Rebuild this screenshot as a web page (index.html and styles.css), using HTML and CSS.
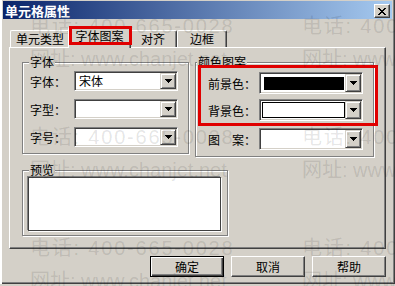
FILE: index.html
```html
<!DOCTYPE html>
<html lang="zh-CN">
<head>
    <meta charset="UTF-8">
    <meta name="viewport" content="width=device-width, initial-scale=1.0">
    <title>单元格属性</title>
    <link rel="stylesheet" href="styles.css">
</head>
<body>
    <div class="dialog">
        <div class="titlebar">
            <span class="title">单元格属性</span>
            <span class="close">
                <svg width="8" height="7" viewBox="0 0 8 7"><path d="M0 0h2v1H0zM6 0h2v1H6zM1 1h2v1H1zM5 1h2v1H5zM2 2h4v1H2zM3 3h2v1H3zM2 4h4v1H2zM1 5h2v1H1zM5 5h2v1H5zM0 6h2v1H0zM6 6h2v1H6z" fill="#000"/></svg>
            </span>
        </div>

        <div class="content">
            <div class="tabs">
                <div class="tab tab-type">单元类型</div>
                <div class="tab tab-font active">字体图案</div>
                <div class="tab tab-align">对齐</div>
                <div class="tab tab-border">边框</div>
            </div>

            <div class="panel">
                <div class="top-groups">
                    <fieldset class="group font-group">
                        <legend>字体</legend>
                        <div class="field">
                            <label>字体：</label>
                            <div class="combo">
                                <span class="value">宋体</span>
                                <span class="arrow"><svg width="7" height="4" viewBox="0 0 7 4"><path d="M0 0h7v1H0zM1 1h5v1H1zM2 2h3v1H2zM3 3h1v1H3z" fill="#000"/></svg></span>
                            </div>
                        </div>
                        <div class="field">
                            <label>字型：</label>
                            <div class="combo">
                                <span class="value"></span>
                                <span class="arrow"><svg width="7" height="4" viewBox="0 0 7 4"><path d="M0 0h7v1H0zM1 1h5v1H1zM2 2h3v1H2zM3 3h1v1H3z" fill="#000"/></svg></span>
                            </div>
                        </div>
                        <div class="field">
                            <label>字号：</label>
                            <div class="combo">
                                <span class="value"></span>
                                <span class="arrow"><svg width="7" height="4" viewBox="0 0 7 4"><path d="M0 0h7v1H0zM1 1h5v1H1zM2 2h3v1H2zM3 3h1v1H3z" fill="#000"/></svg></span>
                            </div>
                        </div>
                    </fieldset>

                    <fieldset class="group color-group">
                        <legend>颜色图案</legend>
                        <div class="marked">
                            <div class="field">
                                <label>前景色：</label>
                                <div class="combo">
                                    <span class="swatch fore"></span>
                                    <span class="arrow"><svg width="7" height="4" viewBox="0 0 7 4"><path d="M0 0h7v1H0zM1 1h5v1H1zM2 2h3v1H2zM3 3h1v1H3z" fill="#000"/></svg></span>
                                </div>
                            </div>
                            <div class="field">
                                <label>背景色：</label>
                                <div class="combo">
                                    <span class="swatch back"></span>
                                    <span class="arrow"><svg width="7" height="4" viewBox="0 0 7 4"><path d="M0 0h7v1H0zM1 1h5v1H1zM2 2h3v1H2zM3 3h1v1H3z" fill="#000"/></svg></span>
                                </div>
                            </div>
                        </div>
                        <div class="field pattern">
                            <label>图　案：</label>
                            <div class="combo">
                                <span class="value"></span>
                                <span class="arrow"><svg width="7" height="4" viewBox="0 0 7 4"><path d="M0 0h7v1H0zM1 1h5v1H1zM2 2h3v1H2zM3 3h1v1H3z" fill="#000"/></svg></span>
                            </div>
                        </div>
                    </fieldset>
                </div>

                <fieldset class="group preview-group">
                    <legend>预览</legend>
                    <div class="preview"></div>
                </fieldset>
            </div>

            <div class="buttons">
                <button class="btn default">确定</button>
                <button class="btn">取消</button>
                <button class="btn">帮助</button>
            </div>
        </div>

        <!-- watermark over the whole dialog -->
        <div class="watermark">
            <div class="wm"><p class="tel">电话: 400-665-0028</p><p>网址: www.chanjet.net</p></div>
            <div class="wm"><p class="tel">电话: 400-665-0028</p><p>网址: www.chanjet.net</p></div>
            <div class="wm"><p class="tel">电话: 400-665-0028</p><p>网址: www.chanjet.net</p></div>
            <div class="wm"><p class="tel">电话: 400-665-0028</p><p>网址: www.chanjet.net</p></div>
            <div class="wm"><p class="tel">电话: 400-665-0028</p><p>网址: www.chanjet.net</p></div>
            <div class="wm"><p class="tel">电话: 400-665-0028</p><p>网址: www.chanjet.net</p></div>
        </div>
    </div>
</body>
</html>
```

FILE: styles.css
```css
* {
    margin: 0;
    padding: 0;
    box-sizing: border-box;
}

body {
    width: 395px;
    height: 286px;
    background: #d4d0c8;
    font-family: "Noto Sans CJK SC", "DejaVu Sans", sans-serif;
    font-size: 12px;
    color: #000;
    overflow: hidden;
}

.dialog {
    position: relative;
    width: 395px;
    height: 284px;
    padding: 1px 3px 0 3px;
    background: #d4d0c8;
    box-shadow: inset 2px 0 0 #fff, inset 1px 0 0 #d4d0c8, inset -1px -1px 0 #404040, inset -2px -2px 0 #808080;
}

/* title bar */
.titlebar {
    height: 18px;
    display: flex;
    align-items: flex-start;
    justify-content: space-between;
    padding: 0 2px 0 2px;
    background: linear-gradient(to right, #0a246a, #a6caf0);
}

.title {
    color: #fff;
    font-weight: bold;
    font-size: 13px;
    line-height: 19px;
}

.close {
    width: 16px;
    height: 14px;
    margin-top: 3px;
    display: flex;
    align-items: center;
    justify-content: center;
    background: #d4d0c8;
    border: 1px solid;
    border-color: #fff #404040 #404040 #fff;
    box-shadow: inset -1px -1px 0 #808080;
}

.content {
    padding: 0 6px;
}

/* tabs */
.tabs {
    display: flex;
    align-items: flex-end;
    height: 20px;
    margin-top: 8px;
    padding-left: 1px;
}

.tab {
    height: 17px;
    border: 1px solid #fff;
    border-right-color: #404040;
    border-bottom: none;
    border-radius: 2px 2px 0 0;
    box-shadow: inset -1px 0 0 #808080;
    text-align: center;
    line-height: 16px;
    background: #d4d0c8;
}

.tab-type { width: 60px; }
.tab-font { width: 63px; }
.tab-align { width: 48px; }
.tab-border { width: 50px; }

.tab.active {
    position: relative;
    z-index: 1;
    height: 21px;
    margin: 0 -2px -1px;
}

.tab.active::after {
    content: "";
    position: absolute;
    left: 0;
    right: -2px;
    top: -2px;
    bottom: 3px;
    border: 3px solid #e00000;
}

/* tab page */
.panel {
    height: 202px;
    border: 1px solid #fff;
    border-right-color: #404040;
    border-bottom-color: #404040;
    box-shadow: inset -1px -1px 0 #808080;
    padding: 8px 0 0 12px;
}

.top-groups {
    display: flex;
    align-items: flex-start;
}

.group {
    min-width: 0;
    border: 1px solid #808080;
    box-shadow: inset 1px 1px 0 #fff, 1px 1px 0 #fff;
}

.group legend {
    line-height: 12px;
    padding: 0 1px;
    background: #d4d0c8;
}

.font-group {
    width: 167px;
    padding: 3px 10px 6px 7px;
}

.font-group legend {
    margin-left: -1px;
}

.color-group {
    width: 179px;
    margin-left: 6px;
    padding: 4px 10px 6px 12px;
}

.color-group legend {
    margin-left: -11px;
}

.field {
    display: flex;
    align-items: center;
}

.field + .field {
    margin-top: 8px;
}

.field label {
    flex: 1;
    white-space: nowrap;
}

.combo {
    display: flex;
    width: 104px;
    height: 20px;
    padding: 1px;
    background: #fff;
    border: 1px solid;
    border-color: #808080 #fff #fff #808080;
    box-shadow: inset 1px 1px 0 #404040, inset -1px -1px 0 #d4d0c8;
}

.combo .value {
    flex: 1;
    padding-left: 3px;
    line-height: 16px;
}

.arrow {
    width: 16px;
    display: flex;
    align-items: center;
    justify-content: center;
    background: #d4d0c8;
    border: 1px solid;
    border-color: #d4d0c8 #404040 #404040 #d4d0c8;
    box-shadow: inset 1px 1px 0 #fff, inset -1px -1px 0 #808080;
}

.color-group .combo {
    height: 22px;
}

.marked {
    position: relative;
}

.marked .field + .field {
    margin-top: 5px;
}

.marked::after {
    content: "";
    position: absolute;
    left: -10px;
    right: -15px;
    top: -7px;
    bottom: -5px;
    border: 3px solid #e00000;
}

.field.pattern {
    margin-top: 7px;
}

.swatch {
    flex: 1;
    margin: 3px 1px 2px 3px;
}

.swatch.fore {
    background: #000;
}

.swatch.back {
    margin: 1px 0 1px 1px;
    background: #fff;
    border: 1px solid #000;
}

.preview-group {
    width: 206px;
    margin-top: 7px;
    padding: 1px 6px 4px 5px;
}

.preview-group legend {
    margin-left: 1px;
}

.preview {
    height: 54px;
    background: #fff;
    border: 1px solid #404040;
    box-shadow: -1px -1px 0 #808080, 1px 1px 0 #fff;
}

/* buttons */
.buttons {
    display: flex;
    justify-content: flex-end;
    gap: 7px;
    margin-top: 7px;
}

.btn {
    width: 74px;
    height: 21px;
    font: inherit;
    color: #000;
    background: #d4d0c8;
    border: 1px solid;
    border-color: #fff #404040 #404040 #fff;
    box-shadow: inset -1px -1px 0 #808080;
}

.btn.default {
    border-color: #000;
    box-shadow: inset 1px 1px 0 #fff, inset -1px -1px 0 #404040, inset -2px -2px 0 #808080;
}

/* watermark */
.watermark {
    position: absolute;
    top: 0;
    left: 0;
    width: 395px;
    height: 286px;
    overflow: hidden;
    pointer-events: none;
    display: grid;
    grid-template-columns: repeat(2, 272px);
    grid-auto-rows: 111px;
    padding: 10px 0 0 30px;
    font-family: "Liberation Sans", "Noto Sans CJK SC", sans-serif;
    font-size: 20px;
    line-height: 33px;
    white-space: nowrap;
    color: rgba(0, 0, 0, 0.11);
}

.wm .tel {
    letter-spacing: 1.8px;
}
```
